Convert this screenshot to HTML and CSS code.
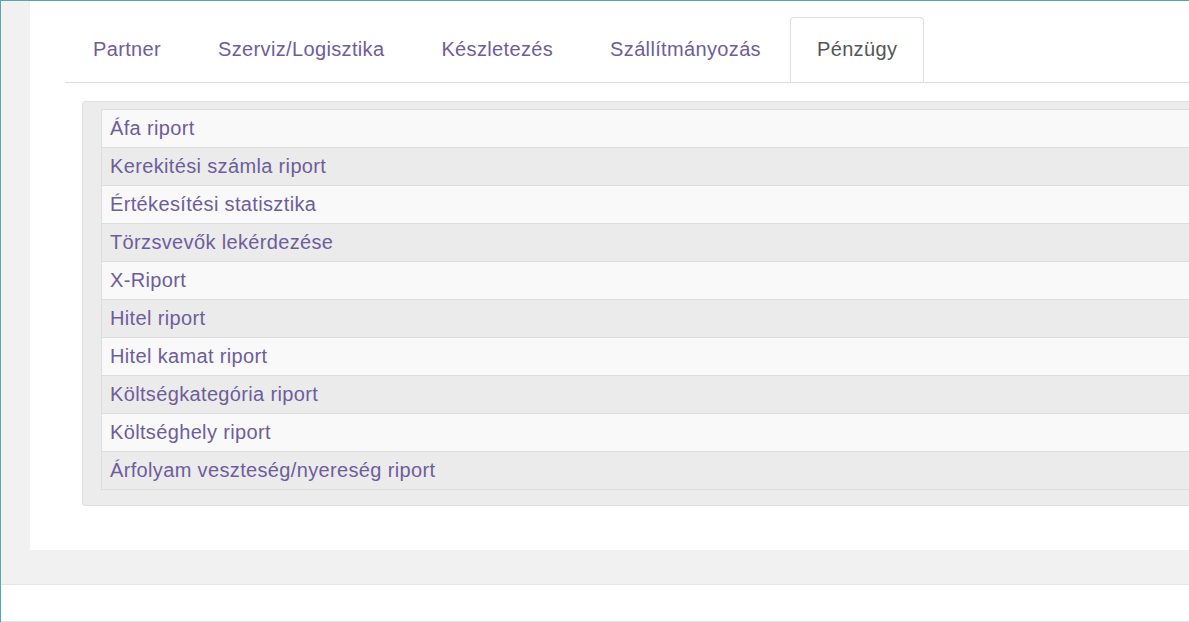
FILE: index.html
```html
<!DOCTYPE html>
<html lang="hu">
<head>
<meta charset="utf-8">
<title>Pénzügy</title>
<link rel="stylesheet" href="styles.css">
</head>
<body>
<div class="page">
  <div class="panel">
    <ul class="tabs">
      <li class="tab"><a href="#">Partner</a></li>
      <li class="tab"><a href="#">Szerviz/Logisztika</a></li>
      <li class="tab"><a href="#">Készletezés</a></li>
      <li class="tab"><a href="#">Szállítmányozás</a></li>
      <li class="tab active"><a href="#">Pénzügy</a></li>
    </ul>
    <div class="well">
      <ul class="list">
        <li class="row"><a href="#">Áfa riport</a></li>
        <li class="row"><a href="#">Kerekitési számla riport</a></li>
        <li class="row"><a href="#">Értékesítési statisztika</a></li>
        <li class="row"><a href="#">Törzsvevők lekérdezése</a></li>
        <li class="row"><a href="#">X-Riport</a></li>
        <li class="row"><a href="#">Hitel riport</a></li>
        <li class="row"><a href="#">Hitel kamat riport</a></li>
        <li class="row"><a href="#">Költségkategória riport</a></li>
        <li class="row"><a href="#">Költséghely riport</a></li>
        <li class="row"><a href="#">Árfolyam veszteség/nyereség riport</a></li>
      </ul>
    </div>
  </div>
</div>
<footer class="footer"></footer>
</body>
</html>
```
FILE: styles.css
```css
html, body {
  margin: 0;
  padding: 0;
  overflow: hidden;
}
body {
  width: 1189px;
  height: 622px;
  background: #ffffff;
  border-top: 1px solid #5ba3ab;
  border-left: 1px solid #5ba3ab;
  box-sizing: border-box;
  font-family: "Liberation Sans", Arial, sans-serif;
  font-size: 20px;
  letter-spacing: 0.35px;
}
.page {
  background: #f1f1f1;
  padding: 0 0 34px 29px;
}
.panel {
  background: #ffffff;
  padding: 16px 0 44px 35px;
}
.tabs {
  list-style: none;
  margin: 0;
  padding: 0;
  display: flex;
  border-bottom: 1px solid #dddddd;
  height: 65px;
}
.tab {
  margin-right: 1px;
  margin-bottom: -1px;
}
.tab a {
  display: block;
  height: 65px;
  box-sizing: border-box;
  padding: 0 27px;
  line-height: 63px;
  border: 1px solid transparent;
  border-radius: 4px 4px 0 0;
  color: #6e5d9d;
  text-decoration: none;
  white-space: nowrap;
}
.tab.active a {
  color: #555555;
  background: #ffffff;
  border-color: #dddddd #dddddd transparent;
  padding: 0 26px;
}
.well {
  margin: 18px 0 0 17px;
  background: #ececec;
  border: 1px solid #e0e0e0;
  border-right: none;
  border-radius: 4px 0 0 4px;
  padding: 7px 0 15px 18px;
}
.list {
  list-style: none;
  margin: 0;
  padding: 0;
  border: 1px solid #dddddd;
  border-right: none;
}
.row {
  height: 37px;
  line-height: 37px;
  padding-left: 8px;
  background: #f9f9f9;
  border-bottom: 1px solid #dddddd;
}
.row:nth-child(even) {
  background: #ebebeb;
}
.row:last-child {
  border-bottom: none;
}
.row a {
  color: #6e5d9d;
  text-decoration: none;
  white-space: nowrap;
}
.footer {
  height: 36px;
  border-top: 1px solid #e2e7ea;
  border-bottom: 1px solid #e2e7ea;
  background: #ffffff;
}
```
